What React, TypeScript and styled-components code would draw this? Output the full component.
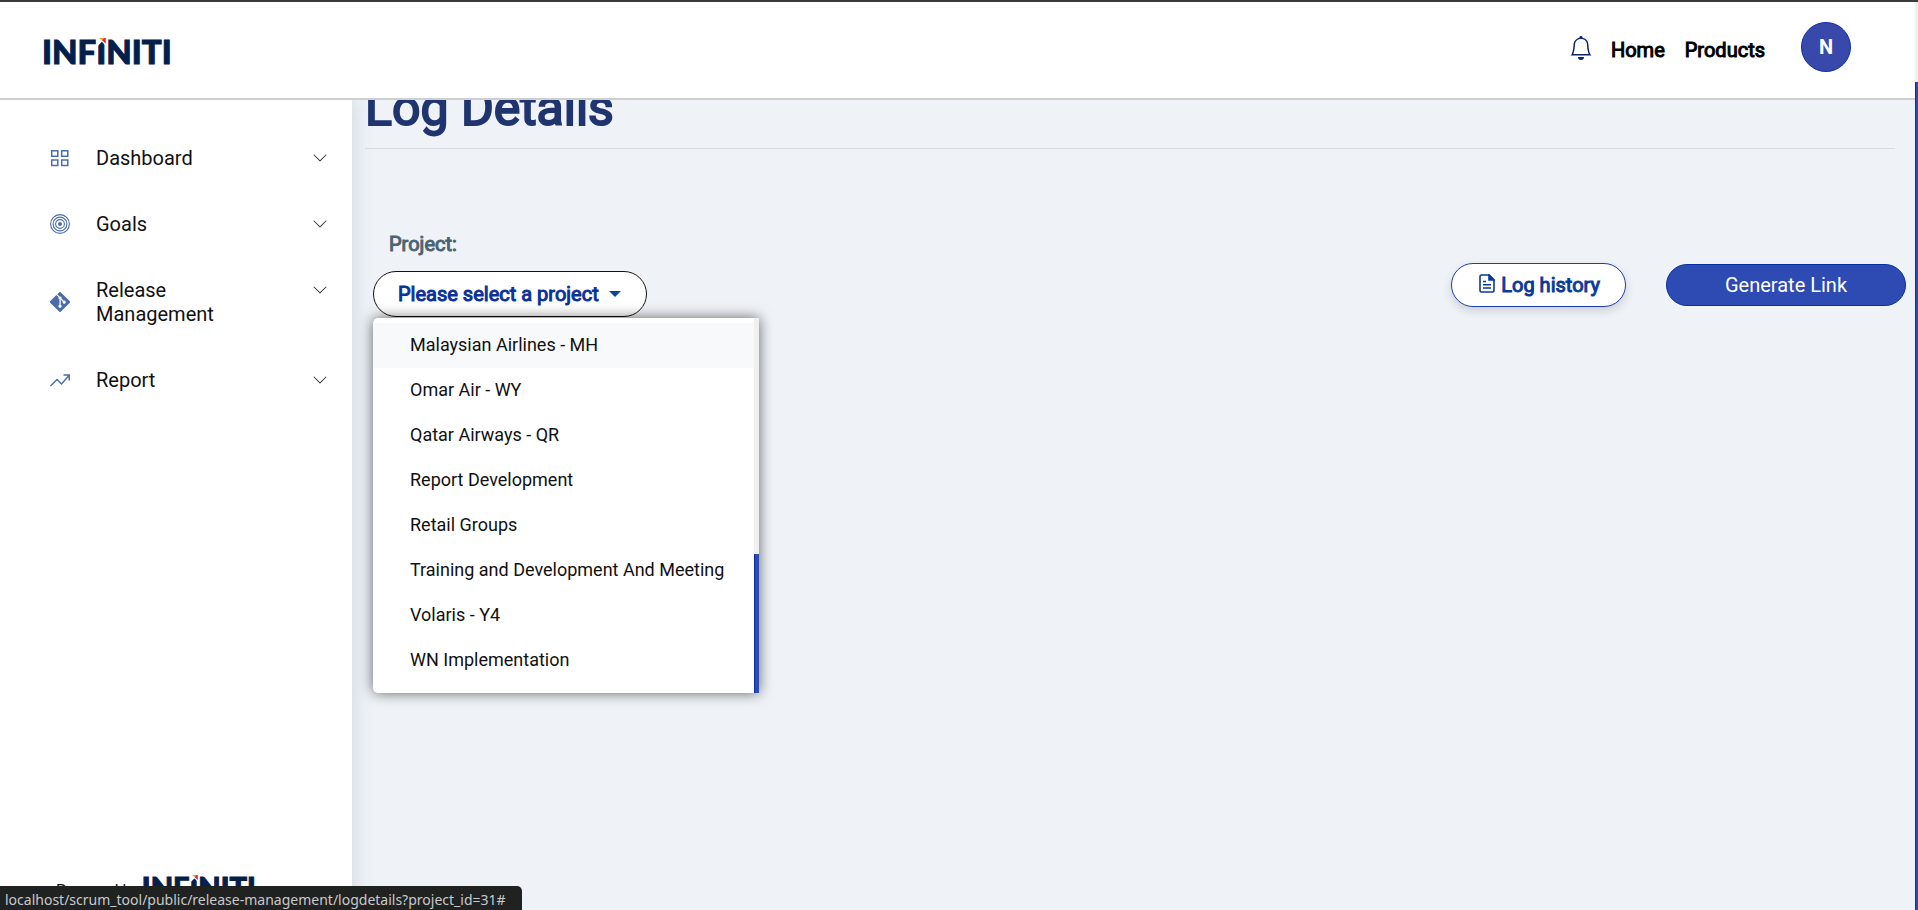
import React from "react";
import styled, { createGlobalStyle } from "styled-components";
import { BsBell, BsChevronDown, BsGit } from "react-icons/bs";

const GlobalStyle = createGlobalStyle`
  *, *::before, *::after { box-sizing: border-box; }
  body {
    margin: 0;
    font-family: Roboto, "Liberation Sans", sans-serif;
    font-size: 20px;
    line-height: 24px;
    color: #111;
    background: #eff3f8;
  }
  a { color: inherit; text-decoration: none; }
  button { font: inherit; cursor: pointer; }
`;

const Shell = styled.div`
  display: flex;
  height: 100vh;
  border-top: 2px solid #3a3a3a;
  overflow: hidden;
`;

const Page = styled.div`
  flex: 1;
  min-width: 0;
  display: flex;
  flex-direction: column;
`;

const ScrollTrack = styled.div<{ $offset: number; $width: number }>`
  flex: none;
  width: ${(p) => p.$width}px;
  padding-top: ${(p) => p.$offset}px;
  background: #f0f0f0;
`;

const ScrollThumb = styled.div`
  height: 100%;
  background: #2e4ab3;
  border-left: 1px solid #0a2fa5;
`;

const Header = styled.header`
  position: relative;
  z-index: 2;
  flex: none;
  display: flex;
  align-items: center;
  justify-content: space-between;
  height: 98px;
  padding: 0 64px 0 42px;
  background: #fff;
  border-bottom: 2px solid #cfcfcf;
`;

const HeaderNav = styled.nav`
  display: flex;
  align-items: center;
  gap: 20px;
  color: #000;
  -webkit-text-stroke: 1px currentColor;
`;

const BellButton = styled.button`
  display: flex;
  margin: 0 -2px 4px 0;
  padding: 0;
  border: 0;
  background: none;
  color: #0b2468;
`;

const Avatar = styled.button`
  width: 50px;
  height: 50px;
  margin: 0 0 6px 16px;
  padding: 0;
  border: 1px solid #0a2fa5;
  border-radius: 50%;
  background: #3949ab;
  color: #fff;
  font-weight: 700;
  -webkit-text-stroke: 0;
`;

const Wordmark = styled.span<{ $size: number }>`
  position: relative;
  display: block;
  padding-top: 2px;
  font-family: Lato, sans-serif;
  font-weight: 900;
  font-size: ${(p) => p.$size}px;
  line-height: 1;
  color: #04204a;
  white-space: nowrap;
  -webkit-text-stroke: 1px currentColor;
`;

const Spark = styled.svg`
  position: absolute;
  left: 43%;
  top: 16%;
  width: 6%;
  height: 22%;
`;

const Body = styled.div`
  flex: 1;
  min-height: 0;
  display: flex;
`;

const Sidebar = styled.aside`
  position: relative;
  z-index: 1;
  flex: none;
  width: 352px;
  display: flex;
  flex-direction: column;
  justify-content: space-between;
  padding: 46px 24px 0 50px;
  background: #fff;
  box-shadow: 0 0 20px rgba(60, 80, 90, 0.2);
`;

const Menu = styled.ul`
  display: flex;
  flex-direction: column;
  gap: 42px;
  margin: 0;
  padding: 0;
  list-style: none;
`;

const MenuLink = styled.a`
  display: flex;
  align-items: center;
  color: #111;

  > svg { flex: none; color: #4a6dab; }
`;

const MenuLabel = styled.span`
  flex: 1;
  margin-left: 26px;
  padding-right: 60px;
`;

const Chevron = styled(BsChevronDown)`
  align-self: flex-start;
  margin: 4px 0;
  && { color: #333; }
`;

const Powered = styled.div`
  display: flex;
  align-items: flex-start;
  gap: 3px;
  height: 40px;
  padding-left: 6px;
  font-size: 16px;
`;

const PoweredText = styled.span`
  padding-top: 9px;
`;

const Main = styled.main`
  flex: 1;
  min-width: 0;
  padding-right: 9px;
`;

const Title = styled.h1`
  margin: -22px 11px 0 13px;
  padding-bottom: 10px;
  border-bottom: 1px solid #d8dce2;
  font-size: 50px;
  line-height: 60px;
  font-weight: 400;
  -webkit-text-stroke: 2px currentColor;
  color: #20356f;
`;

const Toolbar = styled.div`
  display: flex;
  align-items: flex-start;
  justify-content: space-between;
  padding: 83px 0 0 21px;
`;

const Field = styled.div`
  position: relative;
`;

const FieldLabel = styled.div`
  margin: 0 0 15px 16px;
  color: #4b6373;
  -webkit-text-stroke: 1px currentColor;
`;

const Toggle = styled.button`
  display: flex;
  align-items: center;
  gap: 10px;
  height: 46px;
  padding: 0 25px 0 24px;
  border: 1px solid #111;
  border-radius: 23px;
  background: #fff;
  color: #0a3299;
  -webkit-text-stroke: 1px currentColor;

  &::after {
    content: "";
    border: 6px solid transparent;
    border-top-color: #0a46a0;
    border-bottom: 0;
  }
`;

const Dropdown = styled.div`
  position: absolute;
  top: 100%;
  left: 0;
  display: flex;
  margin-top: 1px;
  height: 375px;
  border-radius: 5px 0 0 5px;
  background: #fff;
  box-shadow: 0 0 14px rgba(0, 0, 0, 0.6);
`;

const Options = styled.ul`
  margin: 0;
  padding: 5px 0 10px;
  list-style: none;
`;

const Option = styled.a<{ $active?: boolean }>`
  display: block;
  padding: 8px 30px 10px 37px;
  font-size: 18px;
  line-height: 27px;
  color: #111;
  white-space: nowrap;
  background: ${(p) => (p.$active ? "#f8f9fb" : "transparent")};
`;

const Actions = styled.div`
  display: flex;
  align-items: center;
  gap: 40px;
  margin-top: 31px;
`;

const HistoryButton = styled.button`
  display: flex;
  align-items: center;
  gap: 6px;
  height: 44px;
  padding: 0 25px 0 27px;
  border: 1px solid #1f3db0;
  border-radius: 22px;
  background: #fff;
  color: #0a3a99;
  box-shadow: 0 4px 10px rgba(0, 0, 0, 0.15);
  -webkit-text-stroke: 1px currentColor;

  svg { margin-bottom: 4px; }
`;

const PrimaryButton = styled.button`
  width: 240px;
  height: 42px;
  border: 1px solid #0a2fa5;
  border-radius: 21px;
  background: #2e4ab3;
  color: #fff;
`;

const StatusBar = styled.div`
  position: fixed;
  left: 0;
  bottom: 0;
  z-index: 3;
  height: 24px;
  padding: 3px 16px 0 5px;
  border-radius: 0 5px 0 0;
  background: #202121;
  color: #c8cacc;
  font-family: "Noto Sans", sans-serif;
  font-size: 14px;
  line-height: 21px;
`;

function Logo({ size }: { size: number }) {
  return (
    <Wordmark $size={size}>
      INFINITI
      <Spark viewBox="0 0 8 8" preserveAspectRatio="none" aria-hidden="true">
        <path d="M0 0H8V8L4 4L0 8Z" fill="#fff" />
        <path d="M1 0H6L5 3Z" fill="#f7a11b" />
        <path d="M6 0H8V6L4.500 2.500Z" fill="#e2263b" />
      </Spark>
    </Wordmark>
  );
}

function GridIcon() {
  return (
    <svg width="20" height="20" viewBox="0 0 20 20" fill="none" stroke="currentColor" strokeWidth="1.500" aria-hidden="true">
      <path d="M1.700 2.700H7.800V8.300H1.700ZM11.700 2.700H17.800V8.300H11.700ZM1.700 12H7.800V17.600H1.700ZM11.700 12H17.800V17.600H11.700Z" />
    </svg>
  );
}

function TargetIcon() {
  return (
    <svg width="20" height="20" viewBox="0 0 20 20" fill="none" stroke="currentColor" strokeWidth="1.1" aria-hidden="true">
      <circle cx="10" cy="10" r="9.4" />
      <circle cx="10" cy="10" r="6.9" />
      <circle cx="10" cy="10" r="4.4" />
      <circle cx="10" cy="10" r="2" fill="currentColor" stroke="none" />
    </svg>
  );
}

function TrendIcon() {
  return (
    <svg width="20" height="20" viewBox="0 0 20 20" fill="none" stroke="currentColor" strokeWidth="1.500" aria-hidden="true">
      <path d="M.5 16 7 9.500l4.500 4.500L19 5.500M13.500 5H19.300V10.500" />
    </svg>
  );
}

function FileIcon() {
  return (
    <svg width="16" height="19" viewBox="0 0 16 19" fill="none" stroke="currentColor" strokeWidth="1.600" aria-hidden="true">
      <path d="M2.500 1H10L15 6V16.500Q15 18 13.500 18H2.500Q1 18 1 16.500V2.500Q1 1 2.500 1Z" />
      <path d="M10 1V6H15Z" fill="currentColor" />
      <path d="M4 7.500H7M4 10.700H12M4 14H12" />
    </svg>
  );
}

const menu = [
  { label: "Dashboard", icon: <GridIcon /> },
  { label: "Goals", icon: <TargetIcon /> },
  { label: "Release Management", icon: <BsGit size={20} /> },
  { label: "Report", icon: <TrendIcon /> },
];

const projects = [
  "Malaysian Airlines - MH",
  "Omar Air - WY",
  "Qatar Airways - QR",
  "Report Development",
  "Retail Groups",
  "Training and Development And Meeting",
  "Volaris - Y4",
  "WN Implementation",
];

export default function App() {
  return (
    <>
      <GlobalStyle />
      <Shell>
        <Page>
          <Header>
            <a href="#"><Logo size={33} /></a>
            <HeaderNav>
              <BellButton type="button" aria-label="Notifications"><BsBell size={24} /></BellButton>
              <a href="#">Home</a>
              <a href="#">Products</a>
              <Avatar type="button">N</Avatar>
            </HeaderNav>
          </Header>
          <Body>
            <Sidebar>
              <Menu>
                {menu.map((m) => (
                  <li key={m.label}>
                    <MenuLink href="#">
                      {m.icon}
                      <MenuLabel>{m.label}</MenuLabel>
                      <Chevron size={16} />
                    </MenuLink>
                  </li>
                ))}
              </Menu>
              <Powered>
                <PoweredText>Powered by</PoweredText>
                <Logo size={29} />
              </Powered>
            </Sidebar>
            <Main>
              <Title>Log Details</Title>
              <Toolbar>
                <Field>
                  <FieldLabel id="project-label">Project:</FieldLabel>
                  <Toggle type="button" aria-expanded="true" aria-describedby="project-label">
                    Please select a project
                  </Toggle>
                  <Dropdown>
                    <Options>
                      {projects.map((p, i) => (
                        <li key={p}><Option href="#" $active={i === 0}>{p}</Option></li>
                      ))}
                    </Options>
                    <ScrollTrack $width={5} $offset={236}><ScrollThumb /></ScrollTrack>
                  </Dropdown>
                </Field>
                <Actions>
                  <HistoryButton type="button">
                    <FileIcon />
                    Log history
                  </HistoryButton>
                  <PrimaryButton type="button">Generate Link</PrimaryButton>
                </Actions>
              </Toolbar>
            </Main>
          </Body>
        </Page>
        <ScrollTrack $width={3} $offset={80}><ScrollThumb /></ScrollTrack>
        <StatusBar>localhost/scrum_tool/public/release-management/logdetails?project_id=31#</StatusBar>
      </Shell>
    </>
  );
}
